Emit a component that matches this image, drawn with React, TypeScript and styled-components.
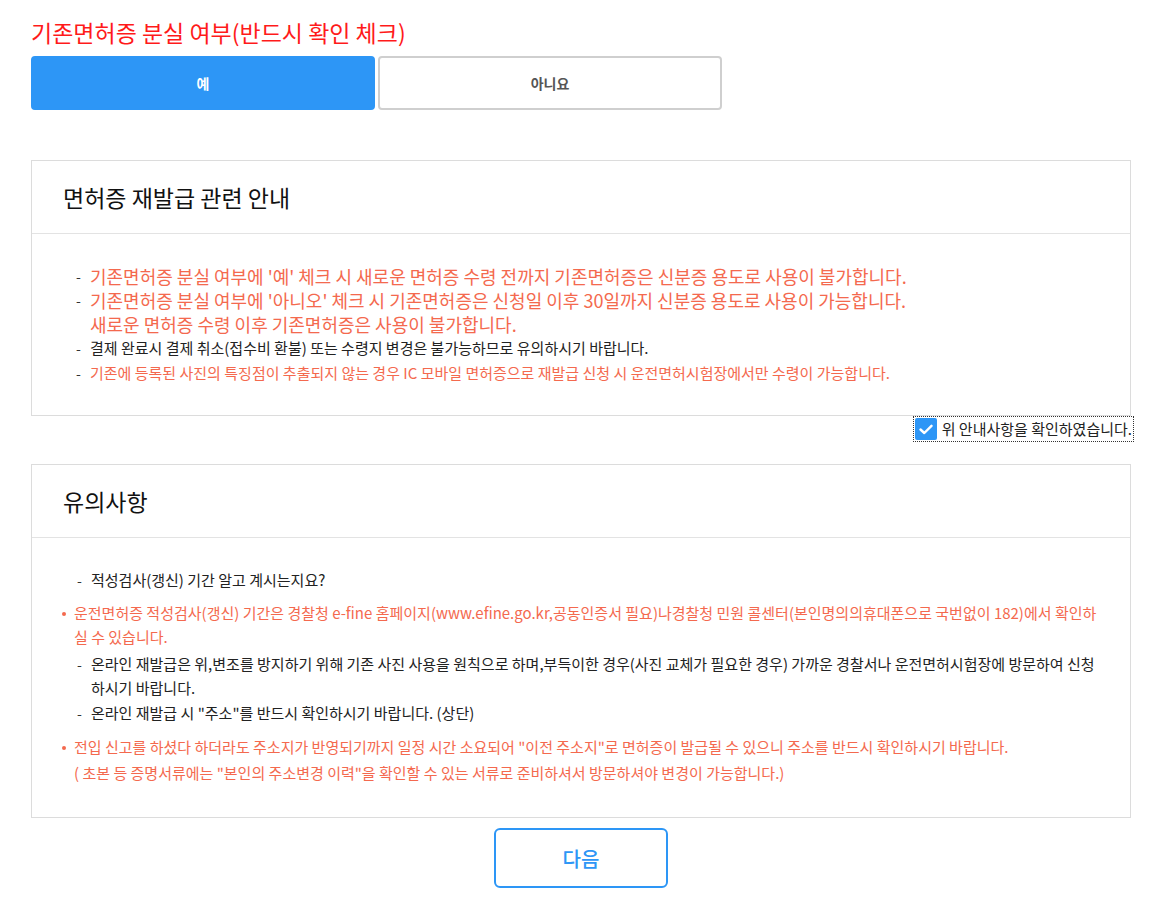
import { useState } from "react";
import styled, { createGlobalStyle } from "styled-components";

const GlobalStyle = createGlobalStyle`
  body {
    margin: 0;
    background: #fff;
    font-family: "Noto Sans CJK KR", "Noto Sans", sans-serif;
    color: #222;
  }
`;

const Page = styled.div`
  width: 1100px;
  padding: 17px 0 14px 31px;
`;

const Question = styled.h2`
  margin: 0;
  font-size: 23px;
  font-weight: 400;
  line-height: 30px;
  color: #ff1a1a;
`;

const Choices = styled.div`
  display: flex;
  gap: 3px;
  margin-top: 9px;
`;

const Choice = styled.button<{ $on?: boolean }>`
  width: 344px;
  height: 54px;
  border-radius: 4px;
  border: 2px solid ${(p) => (p.$on ? "#2d96f6" : "#cfcfcf")};
  background: ${(p) => (p.$on ? "#2d96f6" : "#fff")};
  color: ${(p) => (p.$on ? "#fff" : "#555")};
  font-family: inherit;
  font-size: 14px;
  font-weight: 700;
  cursor: pointer;
`;

const Panel = styled.section<{ $top: number }>`
  margin-top: ${(p) => p.$top}px;
  border: 1px solid #dcdcdc;
`;

const PanelHead = styled.div`
  height: 72px;
  display: flex;
  align-items: center;
  padding: 0 31px;
  border-bottom: 1px solid #e3e3e3;
  font-size: 23px;
  color: #111;
`;

const PanelBody = styled.div<{ $pad: string }>`
  padding: ${(p) => p.$pad};
`;

const Line = styled.div<{ $size?: number; $lh?: number; $tone?: "red" | "dark"; $gap?: number; $indent: number }>`
  display: flex;
  padding-left: ${(p) => p.$indent}px;
  margin-top: ${(p) => p.$gap ?? 0}px;
  font-size: ${(p) => p.$size ?? 15}px;
  line-height: ${(p) => p.$lh ?? 24}px;
  color: ${(p) => (p.$tone === "red" ? "#f4694e" : "#222")};
`;

const Mark = styled.span<{ $w: number }>`
  flex: none;
  width: ${(p) => p.$w}px;
  font-size: 14px;
  color: #333;
`;

const Text = styled.span`
  flex: 1;
  word-break: break-all;
`;

const Dot = styled.span`
  flex: none;
  width: 12px;
  &::before {
    content: "";
    display: inline-block;
    width: 4px;
    height: 4px;
    border-radius: 50%;
    background: #f4694e;
    vertical-align: middle;
    margin-bottom: 2px;
  }
`;

const AgreeRow = styled.div`
  display: flex;
  justify-content: flex-end;
  margin-top: 1px;
`;

const Agree = styled.label`
  display: flex;
  align-items: center;
  gap: 5px;
  outline: 1px dotted #333;
  outline-offset: 0;
  padding: 1px;
  font-size: 15px;
  line-height: 22px;
  color: #222;
  cursor: pointer;
  margin-right: -2px;
`;

const Box = styled.span<{ $on: boolean }>`
  width: 22px;
  height: 22px;
  border-radius: 2px;
  background: ${(p) => (p.$on ? "#2d96f6" : "#fff")};
  border: ${(p) => (p.$on ? "none" : "1px solid #bbb")};
  display: flex;
  align-items: center;
  justify-content: center;
`;

const Footer = styled.div`
  display: flex;
  justify-content: center;
  margin-top: 10px;
`;

const NextButton = styled.button`
  width: 174px;
  height: 60px;
  border: 2px solid #2d96f6;
  border-radius: 6px;
  background: #fff;
  color: #2d96f6;
  font-family: inherit;
  font-size: 20px;
  font-weight: 500;
  cursor: pointer;
`;

const App = () => {
  const [lost, setLost] = useState(true);
  const [agreed, setAgreed] = useState(true);
  return (
    <Page>
      <GlobalStyle />
      <Question>기존면허증 분실 여부(반드시 확인 체크)</Question>
      <Choices>
        <Choice $on={lost} onClick={() => setLost(true)}>예</Choice>
        <Choice $on={!lost} onClick={() => setLost(false)}>아니요</Choice>
      </Choices>

      <Panel $top={50}>
        <PanelHead>면허증 재발급 관련 안내</PanelHead>
        <PanelBody $pad="30px 30px 30px 0">
          <Line $indent={44} $size={18} $tone="red">
            <Mark $w={14}>-</Mark>
            <Text>기존면허증 분실 여부에 '예' 체크 시 새로운 면허증 수령 전까지 기존면허증은 신분증 용도로 사용이 불가합니다.</Text>
          </Line>
          <Line $indent={44} $size={18} $tone="red">
            <Mark $w={14}>-</Mark>
            <Text>기존면허증 분실 여부에 '아니오' 체크 시 기존면허증은 신청일 이후 30일까지 신분증 용도로 사용이 가능합니다.<br />새로운 면허증 수령 이후 기존면허증은 사용이 불가합니다.</Text>
          </Line>
          <Line $indent={44}>
            <Mark $w={14}>-</Mark>
            <Text>결제 완료시 결제 취소(접수비 환불) 또는 수령지 변경은 불가능하므로 유의하시기 바랍니다.</Text>
          </Line>
          <Line $indent={44} $gap={1} $tone="red">
            <Mark $w={14}>-</Mark>
            <Text>기존에 등록된 사진의 특징점이 추출되지 않는 경우 IC 모바일 면허증으로 재발급 신청 시 운전면허시험장에서만 수령이 가능합니다.</Text>
          </Line>
        </PanelBody>
      </Panel>

      <AgreeRow>
        <Agree onClick={() => setAgreed(!agreed)}>
          <Box $on={agreed}>
            {agreed && (
              <svg width="14" height="11" viewBox="0 0 14 11">
                <path d="M1.5 5.5 L5.3 9 L12.5 1.8" stroke="#fff" strokeWidth="2.4" fill="none" strokeLinecap="round" strokeLinejoin="round" />
              </svg>
            )}
          </Box>
          위 안내사항을 확인하였습니다.
        </Agree>
      </AgreeRow>

      <Panel $top={23}>
        <PanelHead>유의사항</PanelHead>
        <PanelBody $pad="30px 30px 31px 0">
          <Line $indent={45}>
            <Mark $w={14}>-</Mark>
            <Text>적성검사(갱신) 기간 알고 계시는지요?</Text>
          </Line>
          <Line $indent={30} $gap={9} $tone="red">
            <Dot />
            <Text>운전면허증 적성검사(갱신) 기간은 경찰청 e-fine 홈페이지(www.efine.go.kr,공동인증서 필요)나경찰청 민원 콜센터(본인명의의휴대폰으로 국번없이 182)에서 확인하실 수 있습니다.</Text>
          </Line>
          <Line $indent={45} $gap={3}>
            <Mark $w={14}>-</Mark>
            <Text>온라인 재발급은 위,변조를 방지하기 위해 기존 사진 사용을 원칙으로 하며,부득이한 경우(사진 교체가 필요한 경우) 가까운 경찰서나 운전면허시험장에 방문하여 신청하시기 바랍니다.</Text>
          </Line>
          <Line $indent={45} $gap={1}>
            <Mark $w={14}>-</Mark>
            <Text>온라인 재발급 시 "주소"를 반드시 확인하시기 바랍니다. (상단)</Text>
          </Line>
          <Line $indent={30} $gap={9} $lh={26} $tone="red">
            <Dot />
            <Text>전입 신고를 하셨다 하더라도 주소지가 반영되기까지 일정 시간 소요되어 "이전 주소지"로 면허증이 발급될 수 있으니 주소를 반드시 확인하시기 바랍니다.<br />( 초본 등 증명서류에는 "본인의 주소변경 이력"을 확인할 수 있는 서류로 준비하셔서 방문하셔야 변경이 가능합니다.)</Text>
          </Line>
        </PanelBody>
      </Panel>

      <Footer>
        <NextButton>다음</NextButton>
      </Footer>
    </Page>
  );
};

export default App;
